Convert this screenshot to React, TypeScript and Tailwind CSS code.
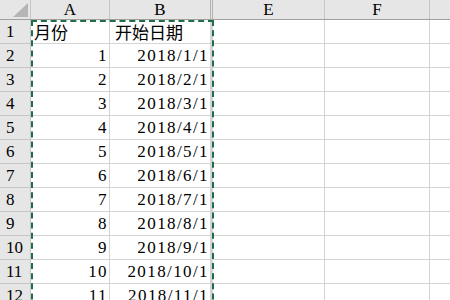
import React from 'react';

const cols = [
  { key: 'A', w: 'w-[79px]' },
  { key: 'B', w: 'w-[103px]' },
  { key: 'E', w: 'w-[112px]' },
  { key: 'F', w: 'w-[105px]' },
];

const rows: { n: number; a: string; b: string }[] = [
  { n: 1, a: '月份', b: '开始日期' },
  ...Array.from({ length: 11 }, (_, i) => ({ n: i + 2, a: String(i + 1), b: `2018/${i + 1}/1` })),
];

const serif = "font-['Liberation_Serif','Noto_Sans_CJK_SC',serif]";

export default function App() {
  return (
    <div className={`relative w-[450px] h-[300px] overflow-hidden bg-white text-black ${serif}`}>
      {/* column header */}
      <div className="flex h-[20px] bg-[#e6e6e6] border-b border-[#9f9f9f]">
        <div className="relative w-[31px] shrink-0 border-r border-[#c6c6c6]">
          <svg className="absolute left-0 top-0" width="31" height="20" viewBox="0 0 31 20">
            <polygon points="13,17 28,17 28,3" fill="#b5b5b5" />
          </svg>
        </div>
        {cols.map(c => (
          <div
            key={c.key}
            className={`${c.w} shrink-0 flex items-center justify-center text-[17px] leading-none border-r ${c.key === 'B' ? 'border-r-[3px] border-double border-[#b0b0b0]' : 'border-[#c6c6c6]'}`}
          >
            {c.key}
          </div>
        ))}
        <div className="flex-1" />
      </div>

      {rows.map(r => (
        <div key={r.n} className="flex h-[24px]">
          <div className="w-[31px] shrink-0 bg-[#e6e6e6] border-r border-b border-[#c6c6c6] flex items-center pl-[6px] text-[17px] leading-none">
            {r.n}
          </div>
          <div
            className={`w-[79px] shrink-0 border-r border-b border-[#d4d4d4] flex items-center leading-none ${
              r.n === 1 ? "justify-start pl-[3px] text-[17px] font-['Noto_Sans_CJK_SC',sans-serif]" : 'justify-end pr-[1px] text-[17px] tracking-[1.4px]'
            }`}
          >
            {r.a}
          </div>
          <div
            className={`w-[103px] shrink-0 border-r-[3px] border-b border-[#d4d4d4] flex items-center leading-none ${
              r.n === 1 ? "justify-start pl-[5px] text-[17px] font-['Noto_Sans_CJK_SC',sans-serif]" : 'justify-end pr-[1px] text-[17px] tracking-[1.4px]'
            }`}
          >
            {r.b}
          </div>
          <div className="w-[112px] shrink-0 border-r border-b border-[#d4d4d4]" />
          <div className="w-[105px] shrink-0 border-r border-b border-[#d4d4d4]" />
          <div className="flex-1 border-b border-[#d4d4d4]" />
        </div>
      ))}

      {/* copy marquee */}
      <div className="absolute left-[31px] top-[20px] w-[183px] h-[320px] border-2 border-dashed border-[#1f6e47]" />
    </div>
  );
}
